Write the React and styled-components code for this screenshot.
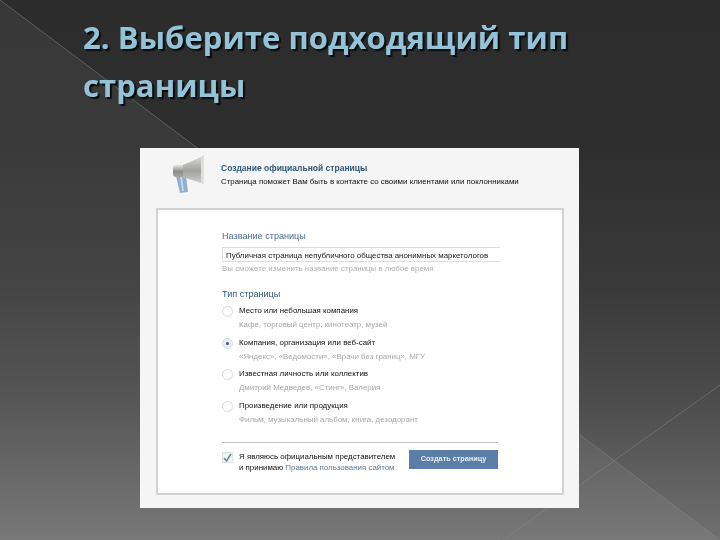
import styled, { createGlobalStyle } from 'styled-components'

const GlobalStyle = createGlobalStyle`
    html, body {
        margin: 0;
        padding: 0;
        background: #2e2d2d;
    }
`

const Slide = styled.div`
    position: relative;
    width: 720px;
    height: 540px;
    overflow: hidden;
    box-sizing: border-box;
    padding-top: 14px;
    background: linear-gradient(#2d2c2c 0, #2f2e2e 150px, #3a3a3a 290px, #4c4c4c 400px, #707070 540px);
`

const Backdrop = styled.svg`
    position: absolute;
    inset: 0;
`

const Title = styled.h1`
    position: relative;
    margin: 0 0 0 83px;
    height: 134px;
    font-family: 'Open Sans', 'Liberation Sans', sans-serif;
    font-weight: 700;
    font-size: 31px;
    line-height: 47.5px;
    letter-spacing: 0.05px;
    white-space: nowrap;
    color: #93c3d8;
    text-shadow: 2px 2px 1px #0b0b0b;
    filter: blur(0.6px);
`

const Panel = styled.div`
    position: relative;
    box-sizing: border-box;
    width: 439px;
    height: 360px;
    margin-left: 140px;
    padding: 14px 16px 14px;
    background: #f5f5f5;
    font-family: 'Liberation Sans', Arial, sans-serif;
    font-size: 7.9px;
    color: #222;
    filter: blur(0.45px);
`

const Header = styled.div`
    display: flex;
    height: 46px;
    gap: 14px;
    margin-left: 15px;
    svg {
        margin-top: -7px;
    }
`

const HeaderText = styled.div`
    padding-top: 0;
`

const HeaderTitle = styled.div`
    font-weight: 700;
    font-size: 8.5px;
    line-height: 13px;
    color: #2f5878;
`

const HeaderSub = styled.div`
    line-height: 13px;
    white-space: nowrap;
    color: #111;
`

const Card = styled.div`
    box-sizing: border-box;
    width: 408px;
    height: 287px;
    padding: 20px 64px 0;
    background: #fff;
    border: 2px solid #d2d2d2;
`

const Label = styled.div`
    font-size: 9.1px;
    line-height: 12px;
    color: ${({ $strong }) => ($strong ? '#2f5878' : '#4a6c8c')};
`

const NameInput = styled.div`
    box-sizing: border-box;
    height: 15px;
    margin: 5px -2px 0 0;
    padding-left: 3px;
    border: 1px solid #dcdcdc;
    border-right: none;
    line-height: 15px;
    white-space: nowrap;
    color: #222;
`

const Hint = styled.div`
    margin-top: 1px;
    margin-bottom: 13px;
    line-height: 12px;
    color: #b0b0b0;
    white-space: nowrap;
`

const Options = styled.div`
    display: flex;
    flex-direction: column;
    margin-top: 3px;
`

const Option = styled.div`
    display: flex;
    gap: 6px;
    height: 31.5px;
`

const Radio = styled.span`
    position: relative;
    flex: none;
    box-sizing: border-box;
    width: 11px;
    height: 11px;
    margin-top: 3px;
    border-radius: 50%;
    border: 1px solid #d8d8d8;
    background: ${({ $checked }) => ($checked ? '#eef0f2' : '#fff')};
    display: flex;
    align-items: center;
    justify-content: center;
    &::after {
        content: '';
        display: ${({ $checked }) => ($checked ? 'block' : 'none')};
        width: 3px;
        height: 3px;
        border-radius: 50%;
        background: #456;
    }
`

const OptionTitle = styled.div`
    line-height: 12px;
    margin-top: 2px;
    color: #111;
`

const OptionSub = styled.div`
    margin-top: 2px;
    line-height: 12px;
    color: #a8a8a8;
`

const Footer = styled.div`
    display: flex;
    margin-top: 13px;
    padding-top: 7px;
    border-top: 1px solid #c4c4c4;
`

const Check = styled.span`
    flex: none;
    box-sizing: border-box;
    width: 11px;
    height: 11px;
    margin-top: 2px;
    margin-right: 6px;
    border: 1px solid #dfe3e5;
    background: #eef2f4;
    svg {
        display: block;
    }
`

const FooterText = styled.div`
    flex: 1;
    margin-top: 1px;
    line-height: 11px;
    white-space: nowrap;
    color: #111;
`

const RulesLink = styled.span`
    color: #5a7a96;
`

const Button = styled.div`
    width: 89px;
    height: 19px;
    background: #5b7ea6;
    color: #e6edf4;
    font-weight: 700;
    font-size: 7.3px;
    line-height: 18px;
    text-align: center;
`

const options = [
    { title: 'Место или небольшая компания', sub: 'Кафе, торговый центр, кинотеатр, музей' },
    { title: 'Компания, организация или веб-сайт', sub: '«Яндекс», «Ведомости», «Врачи без границ», МГУ', checked: true },
    { title: 'Известная личность или коллектив', sub: 'Дмитрий Медведев, «Стинг», Валерия' },
    { title: 'Произведение или продукция', sub: 'Фильм, музыкальный альбом, книга, дезодорант' },
]

const Megaphone = () => (
    <svg width="36" height="40" viewBox="0 0 36 40">
        <defs>
            <linearGradient id="horn" x1="0" y1="0" x2="0" y2="1">
                <stop offset="0" stopColor="#dcdcda" />
                <stop offset="0.55" stopColor="#a2a2a0" />
                <stop offset="1" stopColor="#cfcfcd" />
            </linearGradient>
            <linearGradient id="barrel" x1="0" y1="0" x2="0" y2="1">
                <stop offset="0" stopColor="#e4e4e2" />
                <stop offset="0.55" stopColor="#8b8b89" />
                <stop offset="1" stopColor="#a8a8a6" />
            </linearGradient>
        </defs>
        <path d="M5 21 L15 21 L17 37 L9 38 Z" fill="#8fb0cc" />
        <path d="M9 21 L11 21 L13 36 L11 36 Z" fill="#c3d6e4" />
        <rect x="2" y="10" width="12" height="12" rx="3" fill="url(#barrel)" />
        <path d="M12 10 L30 2 L33 0 L33 29 L30 28 L12 22 Z" fill="url(#horn)" />
        <path d="M30 2 L33 0 L33 29 L30 28 Z" fill="#dededc" />
    </svg>
)

const App = () => {
    return (
        <>
            <GlobalStyle />
            <Slide>
                <Backdrop width="720" height="540" viewBox="0 0 720 540">
                    <polygon points="0,0 720,540 0,540" fill="#ffffff" fillOpacity="0.06" />
                    <line x1="0" y1="0" x2="720" y2="540" stroke="#8a8a8a" strokeOpacity="0.5" />
                    <line x1="720" y1="385" x2="503" y2="540" stroke="#8a8a8a" strokeOpacity="0.5" />
                </Backdrop>
                <Title>
                    2. Выберите подходящий тип
                    <br />
                    страницы
                </Title>
                <Panel>
                    <Header>
                        <Megaphone />
                        <HeaderText>
                            <HeaderTitle>Создание официальной страницы</HeaderTitle>
                            <HeaderSub>Страница поможет Вам быть в контакте со своими клиентами или поклонниками</HeaderSub>
                        </HeaderText>
                    </Header>
                    <Card>
                        <Label>Название страницы</Label>
                        <NameInput>Публичная страница непубличного общества анонимных маркетологов</NameInput>
                        <Hint>Вы сможете изменить название страницы в любое время</Hint>
                        <Label $strong>Тип страницы</Label>
                        <Options>
                            {options.map(o => (
                                <Option key={o.title}>
                                    <Radio $checked={o.checked} />
                                    <div>
                                        <OptionTitle>{o.title}</OptionTitle>
                                        <OptionSub>{o.sub}</OptionSub>
                                    </div>
                                </Option>
                            ))}
                        </Options>
                        <Footer>
                            <Check>
                                <svg width="9" height="9" viewBox="0 0 9 9">
                                    <path d="M1 5 L3.5 8 L8 1" fill="none" stroke="#5f8a80" strokeWidth="1.4" />
                                </svg>
                            </Check>
                            <FooterText>
                                Я являюсь официальным представителем
                                <br />
                                и принимаю <RulesLink>Правила пользования сайтом</RulesLink>
                            </FooterText>
                            <Button>Создать страницу</Button>
                        </Footer>
                    </Card>
                </Panel>
            </Slide>
        </>
    )
}

export default App
